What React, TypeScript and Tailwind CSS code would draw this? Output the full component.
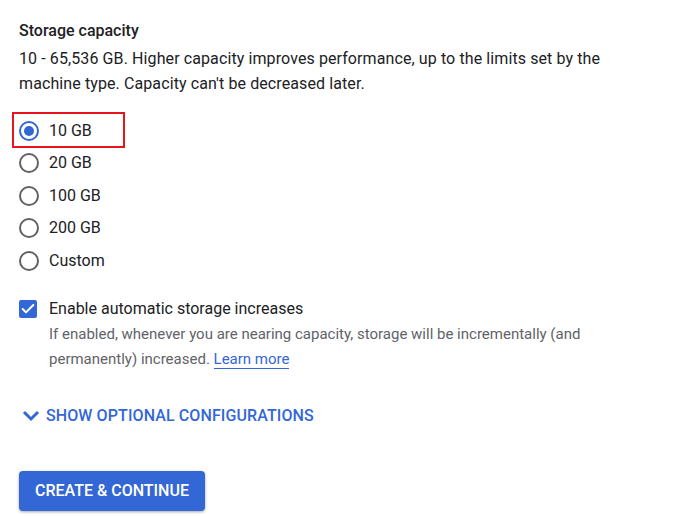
import { Check } from "lucide-react";

const sizes = ["10 GB", "20 GB", "100 GB", "200 GB", "Custom"];

function Radio({ checked }: { checked: boolean }) {
  return (
    <span
      className={`flex h-5 w-5 items-center justify-center rounded-full border-2 ${
        checked ? "border-[#3367d6]" : "border-[#5f6368]"
      }`}
    >
      {checked && <span className="h-[10px] w-[10px] rounded-full bg-[#3367d6]" />}
    </span>
  );
}

export default function App() {
  return (
    <div
      className="min-h-screen bg-white pl-[19px] pt-[18.5px] text-[16px] text-[#202124]"
      style={{ fontFamily: "Roboto, 'Liberation Sans', sans-serif" }}
    >
      <h2 className="text-[16px] font-medium leading-6">Storage capacity</h2>
      <p className="mt-[3.5px] leading-[25px] tracking-[0.1px]">
        10 - 65,536 GB. Higher capacity improves performance, up to the limits set by the
        <br />
        machine type. Capacity can't be decreased later.
      </p>

      {/* Size options */}
      <div className="mt-[18.5px] flex flex-col">
        {sizes.map((s, i) => (
          <label key={s} className="relative flex h-[32.5px] items-center gap-[10px]">
            <Radio checked={i === 0} />
            <span>{s}</span>
            {i === 0 && (
              <span className="pointer-events-none absolute left-[-7px] top-[-3px] h-[36px] w-[113px] border-2 border-[#e8141c]" />
            )}
          </label>
        ))}
      </div>

      {/* Auto increase */}
      <div className="mt-[20px] flex gap-[12px]">
        <span className="mt-[3px] flex h-[18px] w-[18px] shrink-0 items-center justify-center rounded-[2px] bg-[#3367d6]">
          <Check className="h-4 w-4 text-white" strokeWidth={3} />
        </span>
        <div>
          <p className="leading-6">Enable automatic storage increases</p>
          <p className="mt-[1px] text-[15px] leading-[25px] text-[#5f6368]">
            If enabled, whenever you are nearing capacity, storage will be incrementally (and
            <br />
            permanently) increased.{" "}
            <a className="border-b border-[#3367d6] text-[#3367d6]">Learn more</a>
          </p>
        </div>
      </div>

      {/* Optional configurations */}
      <button className="mt-[32px] flex h-6 items-center gap-[6px] text-[16px] font-medium tracking-[0.1px] text-[#3367d6]">
        <svg width="18" height="12" viewBox="0 0 18 12" className="ml-[3px]">
          <path d="M2 2l7 7 7-7" fill="none" stroke="#3367d6" strokeWidth="3" />
        </svg>
        SHOW OPTIONAL CONFIGURATIONS
      </button>

      <button className="mt-[43px] h-10 w-[186px] rounded-[4px] bg-[#3367d6] text-[16px] font-medium text-white shadow-[0_1px_3px_rgba(0,0,0,0.35)]">
        CREATE &amp; CONTINUE
      </button>
    </div>
  );
}
